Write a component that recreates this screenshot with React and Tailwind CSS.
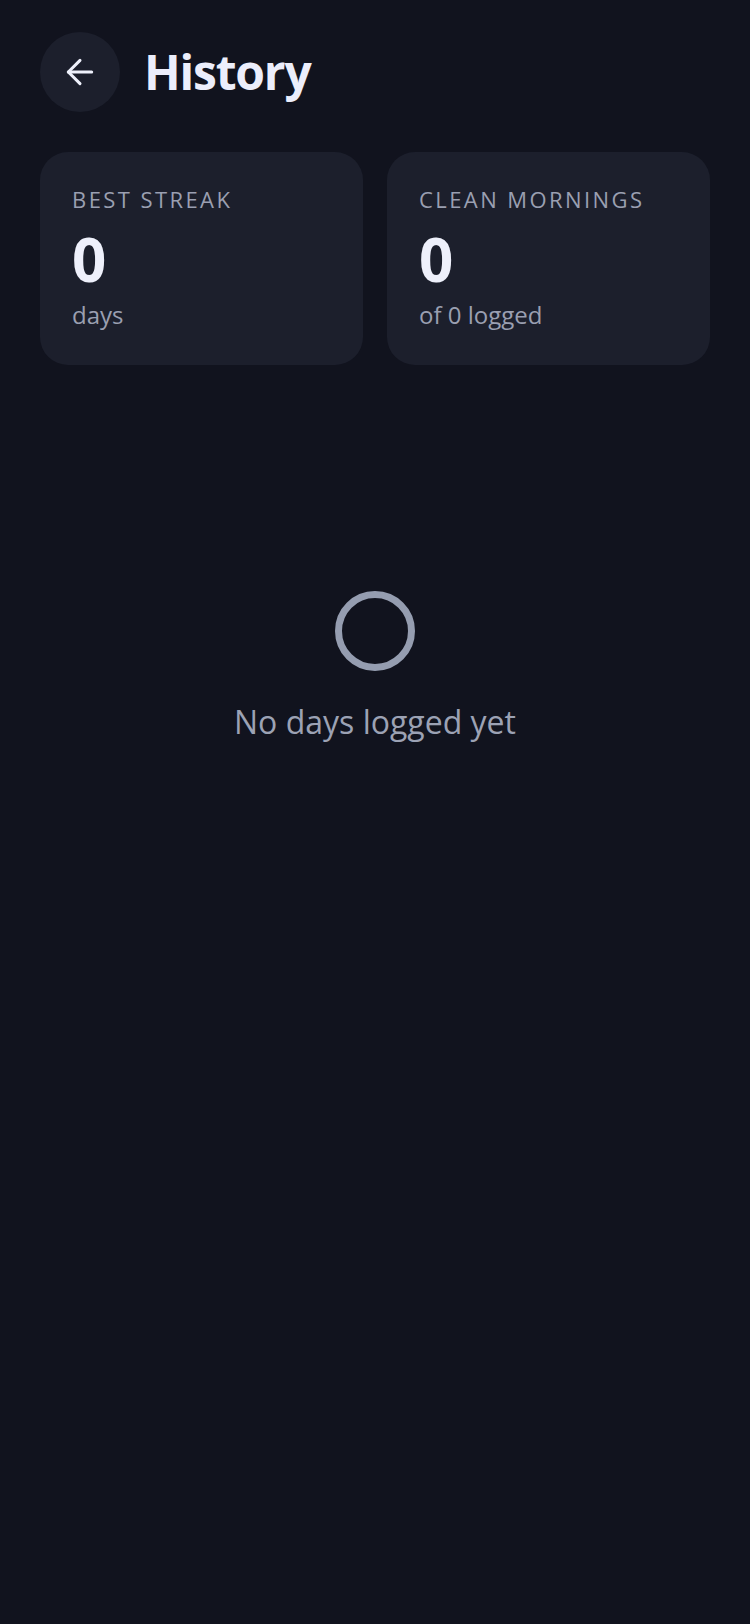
import { ArrowLeft } from 'lucide-react';

const StatCard = ({ label, value, sub }) => (
    <div className="rounded-[28px] bg-[#1c1f2c] px-8 pt-8 pb-[34px]">
        <div className="text-[22px] leading-[30px] tracking-[0.11em] uppercase text-[#9a9fb1]">{label}</div>
        <div className="mt-[6px] text-[60px] font-bold leading-[79px] text-[#eef0fb]">{value}</div>
        <div className="text-[24px] leading-[32px] text-[#9a9fb1]">{sub}</div>
    </div>
);

const App = () => {
    return (
        <div className="min-h-[1624px] bg-[#11131e] px-10 pt-8 font-['Open_Sans',_'Noto_Sans',_sans-serif]">
            <header className="flex items-center gap-6">
                <button className="flex h-20 w-20 items-center justify-center rounded-full bg-[#1c1f2c] text-[#eef0fb]">
                    <ArrowLeft size={40} strokeWidth={1.8} />
                </button>
                <h1 className="text-[48px] font-bold leading-none tracking-[-0.025em] text-[#eceefb]">History</h1>
            </header>

            <div className="mt-10 grid grid-cols-2 gap-6">
                <StatCard label="Best streak" value="0" sub="days" />
                <StatCard label="Clean mornings" value="0" sub="of 0 logged" />
            </div>

            <div className="mt-[226px] flex flex-col items-center">
                <svg width="80" height="80" viewBox="0 0 80 80" fill="none">
                    <circle cx="40" cy="40" r="36.5" stroke="#959db0" strokeWidth="7" />
                </svg>
                <p className="mt-[31px] text-[32px] leading-[40px] text-[#9ca2b4]">No days logged yet</p>
            </div>
        </div>
    );
};

export default App;
